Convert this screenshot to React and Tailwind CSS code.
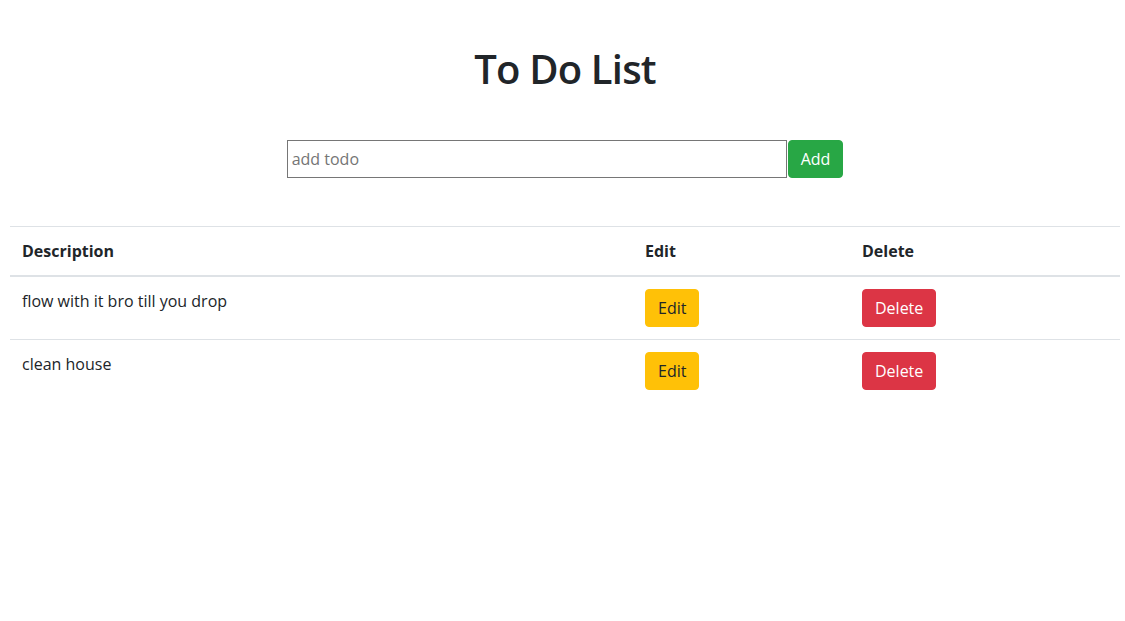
import { useState } from 'react';

const App = () => {
    const [todos] = useState([
        { id: 1, description: 'flow with it bro till you drop' },
        { id: 2, description: 'clean house' },
    ]);

    return (
        <div className="bg-white pl-[10px] pr-[5px] pt-[46px] text-[#212529] font-['Open_Sans',sans-serif] text-base leading-6">
            <h1 className="mb-2 text-center text-[40px] leading-[46px] font-semibold tracking-[-0.02em]">To Do List</h1>

            <form className="mt-[48px] flex justify-center" onSubmit={e => e.preventDefault()}>
                <input
                    type="text"
                    placeholder="add todo"
                    className="h-[38px] w-[500px] border border-[#767676] px-[4px] text-base placeholder:text-[#757575] outline-none"
                />
                <button className="ml-px h-[38px] rounded border border-[#28a745] bg-[#28a745] px-3 text-white">
                    Add
                </button>
            </form>

            <table className="mt-12 w-full table-fixed border-collapse text-left">
                <thead>
                    <tr className="border-t border-[#dee2e6]">
                        <th className="w-[623px] border-b-2 border-[#dee2e6] p-3 font-bold">Description</th>
                        <th className="w-[217px] border-b-2 border-[#dee2e6] p-3 font-bold">Edit</th>
                        <th className="border-b-2 border-[#dee2e6] p-3 font-bold">Delete</th>
                    </tr>
                </thead>
                <tbody>
                    {todos.map(todo => (
                        <tr key={todo.id} className="border-t border-[#dee2e6] first:border-t-0">
                            <td className="p-3 align-top">{todo.description}</td>
                            <td className="p-3 align-top">
                                <button className="h-[38px] rounded border border-[#ffc107] bg-[#ffc107] px-3 text-[#212529]">
                                    Edit
                                </button>
                            </td>
                            <td className="p-3 align-top">
                                <button className="h-[38px] rounded border border-[#dc3545] bg-[#dc3545] px-3 text-white">
                                    Delete
                                </button>
                            </td>
                        </tr>
                    ))}
                </tbody>
            </table>
        </div>
    );
};

export default App;
